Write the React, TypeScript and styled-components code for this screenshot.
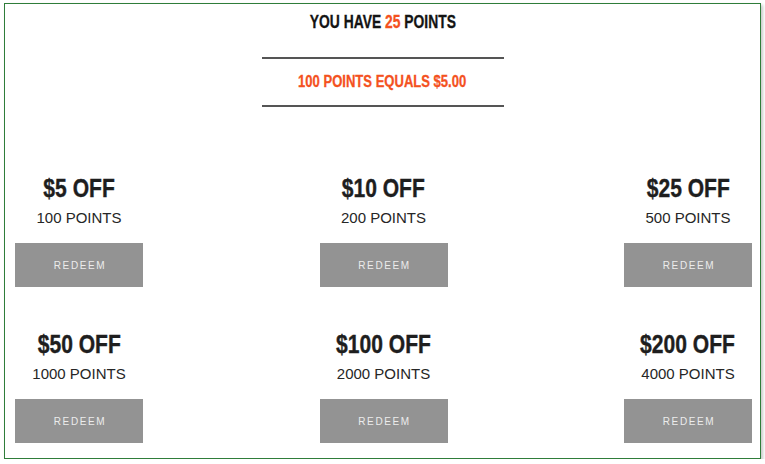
import React from "react";
import styled, { createGlobalStyle } from "styled-components";

const Global = createGlobalStyle`
  html, body { margin: 0; padding: 0; background: #ffffff; }
  body { font-family: "Liberation Sans", Arial, sans-serif; }
`;

const Frame = styled.div`
  box-sizing: border-box;
  margin: 3px 0 0 4px;
  width: 757px;
  height: 456px;
  border: 1px solid #2f7d3a;
  box-shadow: 2px 2px 3px rgba(0, 0, 0, 0.22);
  background: #fff;
  display: flex;
  flex-direction: column;
  align-items: center;
`;

const Squeeze = styled.span<{ $sx: number }>`
  display: inline-block;
  white-space: nowrap;
  transform: scaleX(${(p) => p.$sx});
  transform-origin: center;
`;

const Title = styled.h1`
  margin: 7px 0 0;
  font-family: "Liberation Sans", Arial, sans-serif;
  font-weight: 700;
  font-size: 18px;
  line-height: 22px;
  color: #141414;
  -webkit-text-stroke: 0.3px currentColor;
`;

const Accent = styled.span`
  color: #f4511e;
`;

const RateBox = styled.div`
  margin-top: 24px;
  width: 242px;
  height: 50px;
  box-sizing: border-box;
  border-top: 2px solid #555;
  border-bottom: 2px solid #555;
  display: flex;
  align-items: center;
  justify-content: center;
  font-family: "Liberation Sans", Arial, sans-serif;
  font-weight: 700;
  font-size: 16px;
  color: #f4511e;
  -webkit-text-stroke: 0.3px currentColor;
`;

const Grid = styled.div`
  align-self: stretch;
  margin-top: 66px;
  padding: 0 8px 0 10px;
  display: grid;
  grid-template-columns: 128px 128px 128px;
  justify-content: space-between;
  row-gap: 42px;
`;

const Reward = styled.div`
  display: flex;
  flex-direction: column;
  align-items: center;
`;

const Amount = styled.div`
  font-family: "Liberation Sans", Arial, sans-serif;
  font-weight: 700;
  font-size: 26px;
  line-height: 30px;
  color: #1e1e1e;
  white-space: nowrap;
  -webkit-text-stroke: 0.4px currentColor;
`;

const Cost = styled.div`
  margin-top: 6px;
  font-size: 15px;
  line-height: 18px;
  color: #262626;
  white-space: nowrap;
`;

const Redeem = styled.button`
  margin-top: 16px;
  width: 128px;
  height: 44px;
  border: none;
  background: #939393;
  color: #ececec;
  font-family: "Liberation Sans", Arial, sans-serif;
  font-size: 10px;
  letter-spacing: 1.6px;
  padding: 0 0 0 2px;
  cursor: pointer;
`;

const rewards = [
  { off: "$5 OFF", pts: "100 POINTS" },
  { off: "$10 OFF", pts: "200 POINTS" },
  { off: "$25 OFF", pts: "500 POINTS" },
  { off: "$50 OFF", pts: "1000 POINTS" },
  { off: "$100 OFF", pts: "2000 POINTS" },
  { off: "$200 OFF", pts: "4000 POINTS" },
];

export default function App() {
  return (
    <>
      <Global />
      <Frame>
        <Title>
          <Squeeze $sx={0.77}>
            YOU HAVE <Accent>25</Accent> POINTS
          </Squeeze>
        </Title>
        <RateBox>
          <Squeeze $sx={0.815}>100 POINTS EQUALS $5.00</Squeeze>
        </RateBox>
        <Grid>
          {rewards.map((r) => (
            <Reward key={r.off}>
              <Amount>
                <Squeeze $sx={0.81}>{r.off}</Squeeze>
              </Amount>
              <Cost>{r.pts}</Cost>
              <Redeem>REDEEM</Redeem>
            </Reward>
          ))}
        </Grid>
      </Frame>
    </>
  );
}
